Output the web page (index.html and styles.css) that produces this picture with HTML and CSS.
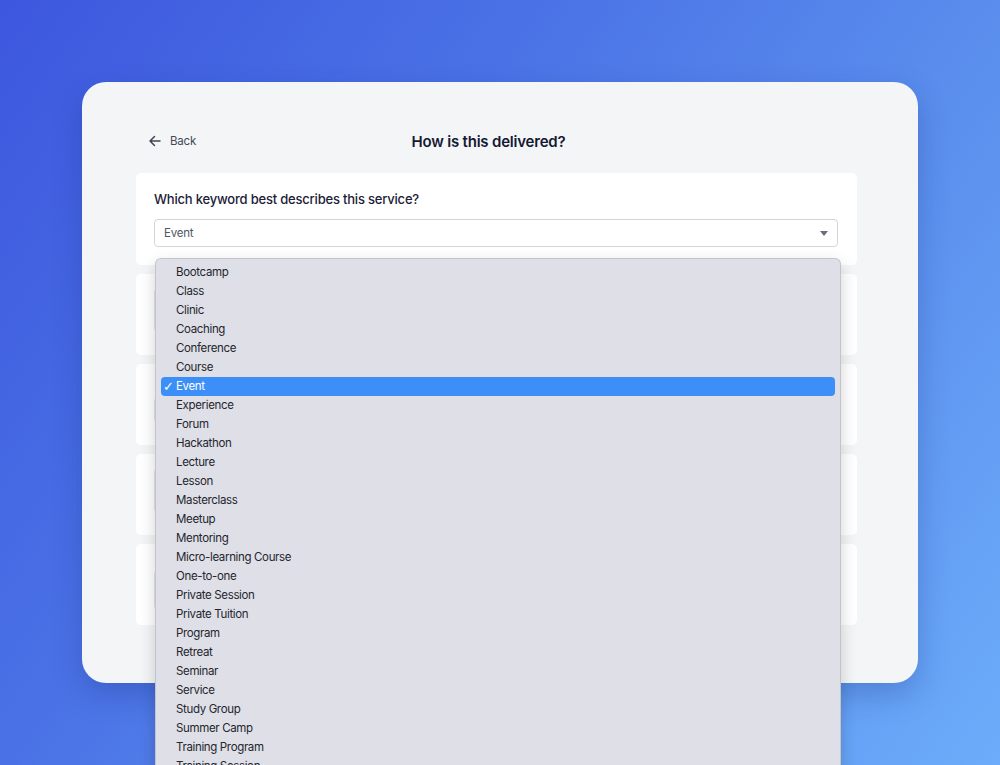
FILE: index.html
```html
<!DOCTYPE html>
<html>
<head>
<meta charset="utf-8">
<link rel="stylesheet" href="styles.css">
</head>
<body>
<div class="panel">
  <div class="header">
    <a class="back">
      <svg class="back-icon" width="14" height="14" viewBox="0 0 14 14"><path d="M12 7H2.5M6.5 2.5L2 7l4.5 4.5" fill="none" stroke="#3f4654" stroke-width="1.5" stroke-linecap="round" stroke-linejoin="round"/></svg>
      <span>Back</span>
    </a>
    <h1 class="title">How is this delivered?</h1>
    <span></span>
  </div>
  <div class="cards">
    <div class="card card-main">
      <label class="label">Which keyword best describes this service?</label>
      <div class="select">
        <span>Event</span>
        <span class="caret"></span>
      </div>
      <ul class="menu">
        <li>Bootcamp</li>
        <li>Class</li>
        <li>Clinic</li>
        <li>Coaching</li>
        <li>Conference</li>
        <li>Course</li>
        <li class="selected"><span class="check">✓</span>Event</li>
        <li>Experience</li>
        <li>Forum</li>
        <li>Hackathon</li>
        <li>Lecture</li>
        <li>Lesson</li>
        <li>Masterclass</li>
        <li>Meetup</li>
        <li>Mentoring</li>
        <li>Micro-learning Course</li>
        <li>One-to-one</li>
        <li>Private Session</li>
        <li>Private Tuition</li>
        <li>Program</li>
        <li>Retreat</li>
        <li>Seminar</li>
        <li>Service</li>
        <li>Study Group</li>
        <li>Summer Camp</li>
        <li>Training Program</li>
        <li>Training Session</li>
      </ul>
    </div>
    <div class="card"><div class="field field-a"></div></div>
    <div class="card"><div class="field field-b"></div></div>
    <div class="card"><div class="field field-c"></div></div>
    <div class="card"><div class="field field-d"></div></div>
  </div>
</div>
</body>
</html>
```
FILE: styles.css
```css
html, body {
  margin: 0;
  padding: 0;
  height: 765px;
  overflow: hidden;
}
body {
  background: linear-gradient(125deg, #3d57de 0%, #4a72e6 35%, #5a8ded 65%, #6cacfa 100%);
  font-family: Inter, "Noto Sans", "Liberation Sans", sans-serif;
  padding-top: 82px;
  box-sizing: border-box;
}
.panel {
  width: 836px;
  height: 601px;
  margin: 0 auto;
  background: #f4f5f7;
  border-radius: 24px;
  box-shadow: 0 12px 30px rgba(20, 40, 120, 0.25);
  box-sizing: border-box;
  padding: 41px 61px 0 54px;
}
.header {
  height: 36px;
  display: grid;
  grid-template-columns: 1fr auto 1fr;
  align-items: center;
  padding: 0 28px 0 12px;
  margin-bottom: 14px;
}
.back {
  display: flex;
  align-items: center;
  gap: 8px;
  font-size: 11.5px;
  letter-spacing: -0.2px;
  color: #434a57;
}
.back-icon { display: block; }
.title {
  margin: 0;
  font-size: 15px;
  font-weight: 600;
  letter-spacing: -0.2px;
  color: #141a33;
}
.cards {
  display: flex;
  flex-direction: column;
  gap: 9px;
}
.card {
  background: #ffffff;
  border-radius: 5px;
  height: 81px;
  box-sizing: border-box;
  padding: 14px 18px;
}
.card-main {
  position: relative;
  height: 92px;
  padding: 16px 19px 18px 18px;
}
.label {
  display: block;
  font-size: 13px;
  font-weight: 500;
  letter-spacing: -0.2px;
  line-height: 20px;
  color: #1b2037;
  margin-bottom: 10px;
}
.select {
  height: 28px;
  box-sizing: border-box;
  border: 1px solid #d3d5dc;
  border-radius: 4px;
  display: flex;
  align-items: center;
  justify-content: space-between;
  padding: 0 9px;
  font-size: 11.5px;
  letter-spacing: -0.2px;
  color: #505663;
  background: #fff;
}
.caret {
  width: 0;
  height: 0;
  border-left: 4px solid transparent;
  border-right: 4px solid transparent;
  border-top: 5px solid #6b6f7a;
}
.field {
  border: 1px solid #e3e4e8;
  border-radius: 4px;
  width: 100%;
  box-sizing: border-box;
}
.field-a { height: 44px; }
.field-b { height: 26px; margin-top: 19px; }
.field-c { height: 45px; }
.field-d { height: 40px; margin-top: 12px; }
.menu {
  position: absolute;
  left: 19px;
  top: 85px;
  width: 686px;
  margin: 0;
  padding: 4px 5px;
  list-style: none;
  box-sizing: border-box;
  background: #dfdfe8;
  border: 1px solid rgba(0, 0, 0, 0.12);
  border-radius: 6px;
  box-shadow: 0 6px 16px rgba(0, 0, 0, 0.18);
  z-index: 10;
}
.menu li {
  height: 19px;
  line-height: 19px;
  padding-left: 15px;
  font-size: 11.5px;
  letter-spacing: -0.35px;
  color: #24262c;
  border-radius: 4px;
  position: relative;
}
.menu li.selected {
  background: #3c8ef9;
  color: #ffffff;
}
.check {
  position: absolute;
  left: 2px;
  top: 0;
  font-size: 13px;
  font-weight: 600;
  font-family: "DejaVu Sans", sans-serif;
}
```
